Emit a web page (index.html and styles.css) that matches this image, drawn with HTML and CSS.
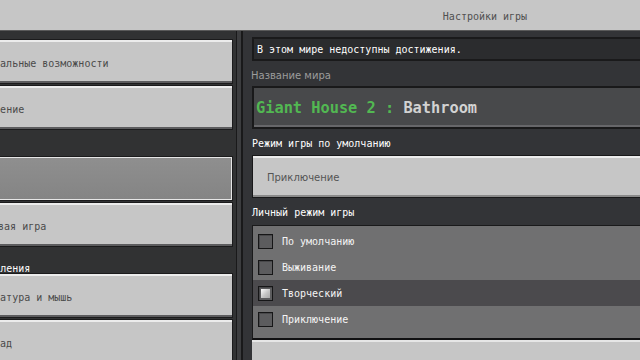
FILE: index.html
```html
<!DOCTYPE html>
<html lang="ru">
<head>
<meta charset="utf-8">
<title>Настройки игры</title>
<link rel="stylesheet" href="styles.css">
</head>
<body>
<div class="screen">
  <header class="topbar"><span class="title">Настройки игры</span></header>
  <div class="main">
    <nav class="sidebar">
      <div class="sb-list">
        <div class="navbtn">Специальные возможности</div>
        <div class="navbtn shift-wide">Управление</div>
        <div class="sect"></div>
        <div class="navbtn active"></div>
        <div class="navbtn shift-narrow">Сетевая игра</div>
        <div class="sect"><span class="sect-title">Элементы управления</span></div>
        <div class="navbtn">Клавиатура и мышь</div>
        <div class="navbtn">Геймпад</div>
      </div>
    </nav>
    <div class="divider"></div>
    <section class="content">
      <div class="content-inner">
        <div class="notice">В этом мире недоступны достижения.</div>
        <div class="field-label">Название мира</div>
        <div class="textfield"><span class="green">Giant House 2 :</span>&nbsp;<span class="light">Bathroom</span></div>
        <div class="label">Режим игры по умолчанию</div>
        <div class="dropdown">Приключение</div>
        <div class="label label-tall">Личный режим игры</div>
        <div class="list">
          <div class="row"><span class="checkbox"></span><span>По умолчанию</span></div>
          <div class="row"><span class="checkbox"></span><span>Выживание</span></div>
          <div class="row selected"><span class="checkbox checked"></span><span>Творческий</span></div>
          <div class="row"><span class="checkbox"></span><span>Приключение</span></div>
          <div class="row"><span class="checkbox"></span></div>
        </div>
        <div class="bottom-btn"></div>
      </div>
    </section>
  </div>
</div>
</body>
</html>
```
FILE: styles.css
```css
* { box-sizing: border-box; margin: 0; padding: 0; }
html, body { width: 640px; height: 360px; overflow: hidden; background: #313233; }
body { font-family: "DejaVu Sans Mono", "Liberation Mono", monospace; font-size: 10px; }

.screen { display: flex; flex-direction: column; height: 360px; }

.topbar {
  height: 31px; flex-shrink: 0;
  background: #c6c6c6;
  border-bottom: 1px solid #5a5a5a;
  display: flex; align-items: center; justify-content: center;
  padding-left: 330px; padding-top: 2px;
  color: #505050;
}

.main { flex: 1; display: flex; min-height: 0; }

.sidebar {
  width: 236px; flex-shrink: 0;
  overflow: hidden;
  background: #313233;
  padding-top: 8px;
}
.sb-list { margin-left: -44px; margin-right: 3px; display: flex; flex-direction: column; }
.navbtn {
  height: 45px; margin-bottom: 1px;
  border: 1px solid #1b1b1c;
  background: #c6c6c6;
  box-shadow: inset 0 2px 0 #ececec, inset 0 -2px 0 #5c5c5e;
  display: flex; align-items: center;
  padding-left: 13px; padding-top: 3px;
  color: #4a4a4a;
  white-space: nowrap;
}
.navbtn.shift-wide { padding-left: 7px; }
.navbtn.shift-narrow { padding-left: 17px; }
.navbtn.active {
  background: linear-gradient(#8f8f8f, #848484);
  box-shadow: inset 0 0 0 1px #e6e6e6;
  color: #ffffff;
}
.sect {
  height: 25px;
  display: flex; align-items: flex-end;
  line-height: 12px;
  padding-bottom: 0;
  color: #ffffff;
  white-space: nowrap;
}
.sect-title { margin-left: -40px; position: relative; top: 2px; }

.divider {
  width: 7px; flex-shrink: 0;
  background: #3c3d3f;
  border-left: 1px solid #19191a;
  border-right: 2px solid #19191a;
}

.content {
  flex: 1; overflow: hidden;
  background: #333437;
  padding: 6px 0 0 9px;
}
.content-inner { margin-right: -30px; display: flex; flex-direction: column; height: 100%; }

.notice {
  height: 24px; flex-shrink: 0;
  border: 2px solid #1a1a1b;
  background: #2b2c2e;
  color: #ffffff;
  display: flex; align-items: center;
  padding-left: 3px; padding-top: 1px;
  white-space: nowrap;
}
.field-label {
  height: 25px; flex-shrink: 0;
  padding-top: 9px; line-height: 12px;
  font-family: "DejaVu Sans", "Noto Sans", sans-serif;
  color: #9c9c9c;
  margin-left: -1px;
}
.textfield {
  height: 43px; flex-shrink: 0;
  border: 2px solid #19191a;
  background: #48494b;
  box-shadow: inset 0 -2px 0 #67676a;
  display: flex; align-items: center;
  padding-left: 2px;
  font-weight: bold; font-size: 15.3px;
  white-space: nowrap;
}
.green { color: #52b852; }
.light { color: #d2d2d2; }

.label {
  height: 26px; flex-shrink: 0;
  padding-top: 9px; line-height: 12px;
  color: #ffffff;
  white-space: nowrap;
}
.label-tall { height: 27px; }

.dropdown {
  height: 43px; flex-shrink: 0;
  border: 1px solid #19191a;
  background: #c6c6c6;
  box-shadow: inset 0 2px 0 #ececec, inset 0 -2px 0 #8a8a8a;
  display: flex; align-items: center;
  padding-left: 14px; padding-top: 2px;
  font-family: "DejaVu Sans", "Noto Sans", sans-serif;
  color: #545454;
}

.list {
  height: 115px; flex-shrink: 0;
  border: 1px solid #1a1a1b;
  border-bottom: 2px solid #111112;
  background: #707071;
  overflow: hidden;
  padding-top: 2px;
}
.row {
  height: 26px;
  display: flex; align-items: center; gap: 9px;
  padding-left: 5px;
  color: #f4f4f4;
  white-space: nowrap;
}
.row.selected { background: #4b4a4d; }
.checkbox {
  width: 15px; height: 15px; flex-shrink: 0;
  border: 1px solid #161617;
  background: #5c5c5e;
  box-shadow: inset 1px 1px 0 #48484a;
  position: relative;
}
.checkbox.checked::after {
  content: "";
  position: absolute; inset: 2px;
  background: linear-gradient(135deg, #ffffff, #c4c4c4 55%, #a8a8a8);
}

.bottom-btn {
  flex: 1;
  background: #c6c6c6;
  box-shadow: inset 0 2px 0 #e6e6e6;
}
```
